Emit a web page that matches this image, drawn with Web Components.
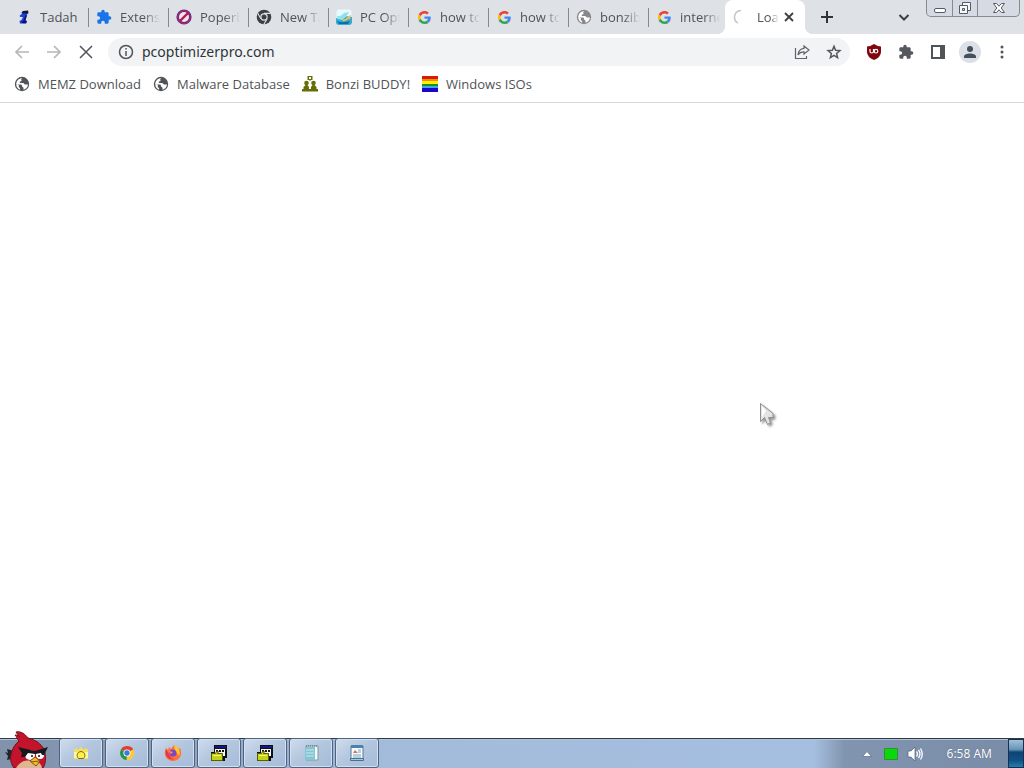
<!DOCTYPE html>
<html lang="en">
<head>
<meta charset="utf-8">
<title>pcoptimizerpro.com</title>
<style>
html,body{height:100%;margin:0}
body{font:13px/18px "Open Sans","Noto Sans",sans-serif;color:#505357;background:#fff;overflow:hidden}
</style>
</head>
<body>
<desktop-screen></desktop-screen>
<script>
const svg = (box, body, w = 16, h = w) => `<svg viewBox="0 0 ${box}" width="${w}" height="${h}" aria-hidden="true">${body}</svg>`;
const puzzle = c => svg('24 24', `<path fill="${c}" d="M20.5 11H19V7c0-1.100-.9-2-2-2h-4V3.500a2.500 2.500 0 0 0-5 0V5H4c-1.100 0-2 .9-2 2v3.800h1.500a2.700 2.700 0 0 1 0 5.400H2V20c0 1.100.9 2 2 2h3.800v-1.500a2.700 2.700 0 0 1 5.400 0V22H17c1.100 0 2-.9 2-2v-4h1.500a2.500 2.500 0 0 0 0-5z"/>`, 16);
const globe = c => svg('16 16', `<circle cx="8" cy="8" r="7.200" fill="${c}"/><path fill="#fff" d="M8.700 2.200c-1.400.4-1.700 1.100-1.300 1.900.5.700-.1 1.300-1.200 1.500-.8.200-.7 1.500.2 1.500h2.700c1 0 1.100 1.400 2.200 1.400h2.700c-.3 2.700-2.100 4.700-4.500 5.200v-1.800c0-1-1.500-.8-1.500-2 0-.9-.7-1.300-1.800-1.300H2.300c-.2 2 1.300 4.300 3.800 5.100v-1.500l-1.300-1.300V9.100l-2.600-.8C2.200 4.700 4.900 1.900 8.700 2.200z"/>`);
const google = svg('48 48', `<path fill="#ea4335" d="M24 9.500c3.540 0 6.710 1.220 9.210 3.600l6.850-6.850C35.900 2.380 30.470 0 24 0 14.620 0 6.510 5.380 2.560 13.220l7.980 6.190C12.430 13.720 17.740 9.500 24 9.500z"/><path fill="#4285f4" d="M46.980 24.550c0-1.570-.15-3.090-.38-4.550H24v9.020h12.940c-.58 2.960-2.260 5.480-4.780 7.180l7.730 6c4.510-4.180 7.090-10.360 7.090-17.650z"/><path fill="#fbbc05" d="M10.530 28.590a14.500 14.500 0 0 1 0-9.180l-7.980-6.190a24 24 0 0 0 0 21.560l7.980-6.190z"/><path fill="#34a853" d="M24 48c6.480 0 11.930-2.130 15.890-5.810l-7.730-6c-2.150 1.450-4.920 2.300-8.160 2.300-6.260 0-11.570-4.220-13.470-9.910l-7.980 6.190C6.510 42.620 14.620 48 24 48z"/>`, 13);
const tadah = svg('16 16', `<path fill="#10163f" d="M5.500 3.500 7 2l5-.500.500 2.500-2 1.500H7z"/><path fill="#1f3de0" d="M6 4.500h5.500l-1 2.500-1.500 4.500 2 .5-1 2.500H4L3.500 12l2-1L7 8H4.500L3.500 7z"/><path fill="#0b1770" d="m9.500 6 1.500.5-1.500 5 1.500.8-1 2H7l-2-1.500 2.500-1.300z"/>`);
const blocked = svg('16 16', `<circle cx="8" cy="8" r="6.300" fill="#f5e4ed" stroke="#46358c" stroke-width="2.600"/><circle cx="8" cy="8" r="6.300" fill="none" stroke="#b52362" stroke-width="1.200"/><path d="m4 12 8-8" stroke="#b01b50" stroke-width="2.400"/>`);
const chromeGray = svg('16 16', `<circle cx="8" cy="8" r="7.300" fill="#3c4044"/><path d="M8 4.400h6.500M4.900 9.800 1.700 4.200M11.100 9.800 7.900 15.300" stroke="#dee1e6" stroke-width="1.100"/><circle cx="8" cy="8" r="3.700" fill="#dee1e6"/><circle cx="8" cy="8" r="2.500" fill="#3c4044"/>`);
const optimizer = svg('16 16', `<rect x=".5" y=".5" width="15" height="15" rx="2.500" fill="#e8fafc"/><path fill="#38abcf" d="M0 9c3 1 5 1 7-.5C9 7 12 7 16 8v5q0 3-3 3H3q-3 0-3-3z"/><path fill="#8fe1ec" d="M1 7c3 1 5-1 7-3l5-1-3 5-4 3-5-1z"/><path fill="#f2bd55" d="M6 10c4 2 5-3 9-4l-1 4c-3 0-4 3-7 2z"/><path fill="#0a6cab" d="M1 12c4 2 9 1 13 0l-2 3H3z"/>`);
const spinner = svg('16 16', `<path d="M8 1.500C0 2 0 12 5 14" fill="none" stroke="#c3c6ca" stroke-width="1.500"/>`);
const buddy = svg('16 16', `<path fill="#666e08" d="M5.500 0h5v4H9L8 5 7 4H5.500z"/><circle cx="4.500" cy="7" r="2.300" fill="#666e08"/><circle cx="11.500" cy="7" r="2.300" fill="#666e08"/><path fill="#666e08" d="M3.500 9h2L7 11v2h2v-2l1.500-2h2l2 2v2H16v2.500H0V13h1.500v-2z"/><path fill="#fff" d="M7 1h2v2H7z"/>`);
const rainbow = svg('16 16', ['#d51b08','#f48b12','#fff200','#159126','#45a4e8','#1907c8'].map((c,i)=>`<rect y="${[0,3,5,8,10,12][i]}" width="16" height="${i===5?4:3}" fill="${c}"/>`).join(''));
const taskIcons = {
 explorer: svg('18 18', `<path fill="#f8df58" d="M2 5h2l1-1 1 2 3-3 3 3 1-2 1 1h2v10H2z"/><path fill="#fff7a0" d="M2 8h3v6H2zM13 8h3v6h-3z"/><path fill="#fff04c" stroke="#77680a" d="M6.500 14.500C4 12 5 8 9 7.500c4 .5 5 4.500 2.500 7z"/>`, 18),
 chrome: svg('18 18', `<path fill="#df4031" d="M9 9 2.200 5A8 8 0 0 1 16 5z"/><path fill="#fcc934" d="M9 9l7-4a8 8 0 0 1-7.500 12z"/><path fill="#29954a" d="m9 9-.5 8A8 8 0 0 1 2.200 5z"/><circle cx="9" cy="9" r="4" fill="#fff"/><circle cx="9" cy="9" r="3" fill="#3879df"/>`, 16),
 firefox: svg('18 18', `<path fill="#ff7139" d="M10 1c2 1 4 3 5 4l1-1c3 6 0 13-7 13S-1 10 2 4l2 2 1-3 2 2z"/><path fill="#ffca28" d="M10 1c5 2 7 7 5 11-1-3-3-3-4-5z"/><path fill="#e8334e" d="M2 5c-2 7 3 12 9 10-3 0-5-2-6-5z"/><circle cx="9" cy="9" r="3.500" fill="#7847c9"/><path fill="#ff9d2e" d="m5 7 4 1-2 2z"/>`, 18),
 program: svg('18 18', `<path fill="#111" d="M4 1h13v13h-2v3H1V8h3z"/><path fill="#15168c" d="M5 2h11v2H5z"/><path fill="#f7f7f7" d="M5 5h10v7H5z"/><path stroke="#111" stroke-width="2" stroke-dasharray="2 1" d="M6 7h8"/><path fill="#c8cf17" stroke="#55600a" d="M1.500 9.500h4l1-2h2l-1 2h5v7h-11z"/><path stroke="#f8f680" d="M3 11.500h8"/>`, 18),
 notepad: svg('18 18', `<path fill="#f4fafa" stroke="#7e999c" d="M4 2h12v14H4z"/><path fill="#83c5d3" d="M3 3h10v13H3z"/><path stroke="#c7e8ee" d="M4 6h8M4 9h8M4 12h8"/><path stroke="#546a70" stroke-dasharray="1 1" d="M4 2h11"/>`, 18),
 wordpad: svg('18 18', `<path fill="#f4faff" stroke="#527d9f" d="M3 2h12v13H3z"/><path fill="#4a82a9" d="M3 1h12v3H3z"/><path stroke="#7ba5c2" d="M10 6h3M10 8h3M5 11h8M5 13h8"/><path fill="#cf7854" d="m5 9 2-3 3 3z"/><path fill="#a9c5d9" stroke="#48718d" d="M2.500 14.500h13v2h-13z"/>`, 18)
};
const bird = svg('50 40', `<path fill="#222529" d="m14 23-7-2 1 4-3-1 3 4-1 4 8-2z"/><path fill="#c3142b" stroke="#6d1524" d="M19 13c-2-2-2-4-4-6 3 0 4 1 5 2-2-2-3-3-4-5 5-1 9 2 12 6 9 2 16 8 17 15 1 5 1 10-2 15H14c-3-4-4-8-3-13 1-6 4-11 8-14z"/><path fill="#dfb691" d="M16 40c5-8 12-9 17-6 5-1 8 1 9 6z"/><circle cx="30" cy="27" r="5" fill="#fff"/><circle cx="40" cy="27" r="4" fill="#fff"/><circle cx="32" cy="28" r="1" fill="#111"/><circle cx="39" cy="28" r="1" fill="#111"/><path fill="#17191d" d="m18 19 17 4 13-4-4 8h-2l-1-2-6 1-7-1-3 4h-4l1-4z"/><path fill="#f5bd27" stroke="#815315" d="m30 33 5-4 5 4-4 5z"/><path stroke="#815315" d="m31 34 8-1"/>`, 50, 40);

const define = (name, css, html) => {
  customElements.define(name, class extends HTMLElement {
    connectedCallback() {
      if (this.shadowRoot) return;
      const t = document.createElement('template');
      t.innerHTML = `<style>:host,*{box-sizing:border-box}svg{display:block;flex:none}button,a{font:inherit;color:inherit;text-decoration:none}button{border:0;background:none;padding:0;margin:0}${css}</style>` + (typeof html === 'function' ? html(this) : html);
      this.attachShadow({mode:'open'}).append(t.content.cloneNode(true));
    }
  });
};

define('browser-tab', `
:host{display:block;flex:0 1 80px;min-width:0;position:relative}
button{display:flex;align-items:center;width:100%;height:34px;padding:0 8px;gap:8px;text-align:left;border-radius:8px 8px 0 0}
.icon{display:grid;place-items:center;flex:0 0 16px;height:16px}
.title{flex:1;min-width:0;overflow:hidden;white-space:nowrap}
:host([fade]) .title{-webkit-mask-image:linear-gradient(90deg,#000 60%,transparent);mask-image:linear-gradient(90deg,#000 60%,transparent)}
:host(:not([active]))::after{content:"";position:absolute;right:-1px;top:8px;width:1px;height:19px;background:#85888d}
:host([last])::after{display:none}
:host([active]){display:flex;background:#fff;border-radius:8px 8px 0 0;margin-left:-3px}
:host([active])::before,:host([active])::after{content:"";position:absolute;bottom:0;width:8px;height:8px;top:auto;background:radial-gradient(circle at 0 0,transparent 8px,#fff 8px)}
:host([active])::before{left:-8px}
:host([active])::after{right:-8px;background:radial-gradient(circle at 100% 0,transparent 8px,#fff 8px)}
:host([active]) .tab{flex:1;min-width:0;padding-right:0}`,
'<button class="tab" role="tab"><span class="icon"><slot name="icon"></slot></span><span class="title"><slot></slot></span></button><slot name="close"></slot>');

define('window-controls', `
:host{display:flex;height:17px;border:1px solid #858a93;border-top:0;border-radius:0 0 5px 5px;background:#d6dae2}
button{display:grid;place-items:center;width:25px}
button+button{border-left:1px solid #858a93}button:last-child{width:42px}`,
`<button aria-label="Minimize">${svg('16 16','<rect x="2.500" y="8.500" width="11" height="4" rx="1.500" fill="#fff" stroke="#555b64"/>')}</button>
<button aria-label="Restore">${svg('16 16','<path fill="#f7f8fa" stroke="#555b64" d="M5.500 2.500h8v8h-8z"/><path fill="#f7f8fa" stroke="#555b64" d="M2.500 5.500h8v8h-8z"/><path fill="#d6dae2" stroke="#555b64" d="M5.500 8.500h2v2h-2z"/>')}</button>
<button aria-label="Close window">${svg('16 16','<path fill="#fff" stroke="#555b64" d="M2.500 3.500h3L8 6.200l2.500-2.700h3L10.200 8l3.300 4.500h-3L8 9.800l-2.500 2.700h-3L5.800 8z"/>')}</button>`);

define('tab-strip', `
:host{display:flex;background:#dee1e6;height:34px;padding:0 4px 0 8px}
nav{display:flex;flex:0 1 797px;min-width:0}
.close{display:grid;place-items:center;width:26px;padding-right:6px;height:34px}
.new{width:44px;display:grid;place-items:center}
.space{flex:1}
.search{width:28px;margin-right:8px;display:grid;place-items:center}`,
`<nav role="tablist" aria-label="Tabs">${[[tadah,'Tadah'],[puzzle('#1a73e8'),'Extensi'],[blocked,'Poperb'],[chromeGray,'New Ta'],[optimizer,'PC Opt'],[google,'how to'],[google,'how to'],[globe('#85878a'),'bonzib'],[google,'interne']].map(([i,t],n)=>`<browser-tab ${n?'fade':''} ${n===8?'last':''}><span slot="icon">${i}</span>${t}</browser-tab>`).join('')}
<browser-tab active fade><span slot="icon">${spinner}</span>Loa<button slot="close" class="close" aria-label="Close tab">${svg('16 16','<path d="m4 4 8 8m0-8-8 8" stroke="#3c4043" stroke-width="1.800"/>')}</button></browser-tab></nav>
<button class="new" aria-label="New tab">${svg('16 16','<path d="M8 2v12M2 8h12" stroke="#303338" stroke-width="2"/>')}</button><span class="space"></span>
<button class="search" aria-label="Search tabs">${svg('16 16','<path fill="none" d="m3.500 6 4.500 4.500L12.500 6" stroke="#3c4043" stroke-width="2"/>')}</button><window-controls></window-controls>`);

define('address-bar', `
:host{display:flex;align-items:center;flex:1;min-width:0;height:28px;border-radius:14px;background:#f1f3f4;padding:0 0 0 10px}
label{display:grid;place-items:center;width:16px}
input{flex:1;min-width:0;border:0;outline:0;background:none;font:14px/20px "Noto Sans","Open Sans",sans-serif;color:#303338;padding:0 8px 2px;height:24px}
button{width:32px;height:28px;display:grid;place-items:center}`,
`<label for="url" aria-label="Address">${svg('16 16','<circle cx="8" cy="8" r="6.500" fill="none" stroke="#505459" stroke-width="1.500"/><path d="M8 7v5M8 4v1.500" stroke="#505459" stroke-width="1.500"/>')}</label><input id="url" value="pcoptimizerpro.com" spellcheck="false">
<button aria-label="Share">${svg('16 16','<path fill="none" stroke="#5f6368" stroke-width="1.200" d="M1.500 4v10.500h11V12M10 2l5 4-5 4V7.800C7.500 7.800 5.500 8.500 4 11c.3-4 2.500-6.300 6-6.700z"/>')}</button>
<button aria-label="Bookmark">${svg('16 16','<path fill="none" stroke="#55595e" stroke-width="1.500" d="m8 2.300 1.600 4 4.300.3-3.300 2.800 1 4.200L8 11.400l-3.600 2.200 1-4.200-3.300-2.800 4.300-.3z"/>')}</button>`);

define('tool-bar', `
:host{display:flex;align-items:center;height:36px;padding:0 6px}
button{display:grid;place-items:center;width:32px;height:28px;flex:none}
address-bar{margin:0 8px 0 6px}
.avatar{width:22px;height:22px;border-radius:50%;background:#dcdfe7;margin:0 5px}`,
`<button aria-label="Back">${svg('16 16','<path fill="none" stroke="#b5b7ba" stroke-width="1.700" d="M15 8H2m6-6L2 8l6 6"/>')}</button>
<button aria-label="Forward">${svg('16 16','<path fill="none" stroke="#b5b7ba" stroke-width="1.700" d="M1 8h13M8 2l6 6-6 6"/>')}</button>
<button aria-label="Stop">${svg('16 16','<path stroke="#505459" stroke-width="1.500" d="m2 2 12 12m0-12L2 14"/>')}</button>
<address-bar></address-bar>
<button aria-label="uBlock">${svg('16 16','<path fill="#800610" d="M8 0q4 2.500 7 2.500V8q0 5-7 8-7-3-7-8V2.500Q4 2.500 8 0z"/><path fill="none" stroke="#fff" stroke-width="1.200" d="M4 5v2.500C4 9.500 7.500 9.500 7.500 7.500V5"/><circle cx="10" cy="7.200" r="1.800" fill="none" stroke="#fff" stroke-width="1.200"/>')}</button>
<button aria-label="Extensions">${puzzle('#55595e')}</button>
<button aria-label="Side panel">${svg('16 16','<path fill="none" stroke="#505459" stroke-width="2" d="M2 2h12v12H2z"/><path fill="#505459" d="M10 2h4v12h-4z"/>')}</button>
<button class="avatar" aria-label="Profile">${svg('16 16','<circle cx="8" cy="5" r="3" fill="#45505b"/><path fill="#45505b" d="M2 14v-1.500c0-4 12-4 12 0V14z"/>')}</button>
<button aria-label="Menu">${svg('16 16','<g fill="#505459"><circle cx="8" cy="3" r="1.500"/><circle cx="8" cy="8" r="1.500"/><circle cx="8" cy="13" r="1.500"/></g>')}</button>`);

define('bookmark-link', `:host{display:block}a{display:flex;align-items:center;gap:8px;white-space:nowrap}`, '<a href="#"><slot name="icon"></slot><slot></slot></a>');
define('bookmark-bar', `:host{display:flex;align-items:center;gap:12px;height:33px;padding:0 14px 4px;border-bottom:1px solid #d5d7da}`,
[[globe('#505459'),'MEMZ Download'],[globe('#505459'),'Malware Database'],[buddy,'Bonzi BUDDY!'],[rainbow,'Windows ISOs']].map(([i,t])=>`<bookmark-link><span slot="icon">${i}</span>${t}</bookmark-link>`).join(''));

define('task-button', `:host{display:block;width:44px;height:30px}button{display:grid;place-items:center;width:100%;height:100%;border:1px solid #4e6380;border-radius:3px;background:linear-gradient(145deg,#d0dceb,#b4c7df 45%,#a5bbd8);box-shadow:inset 0 0 0 1px #d3e0ef}`,
e=>`<button aria-label="${e.getAttribute('app')}">${taskIcons[e.getAttribute('app')]}</button>`);
define('task-bar', `
:host{display:flex;height:30px;border-top:1px solid #303947;background:linear-gradient(90deg,#8192ab,#8395ae 50px,#a3bbdb 380px,#a5bfe0 calc(100% - 210px),#8295b0 calc(100% - 180px),#788ba7);box-shadow:inset 0 1px #b2c4da}
.start{width:59px;display:flex;align-items:flex-end;height:29px;flex:none}
.tasks{display:flex;gap:2px;flex:1;min-width:0;margin-top:-1px}
.tray{display:flex;align-items:center;color:#fff}
.tray button{display:grid;place-items:center;width:24px}
time{font:12px/18px "Noto Sans",sans-serif;padding:0 16px 0 20px;text-shadow:0 0 1px #44546c;white-space:nowrap}
.desktop{width:16px;border:1px solid #16314f;background:linear-gradient(#a0c0d8,#6893b7 35%,#0d4479 45%,#135083 75%,#247eb0)}`,
`<button class="start" aria-label="Start">${bird}</button><div class="tasks">${['explorer','chrome','firefox','program','program','notepad','wordpad'].map(a=>`<task-button app="${a}"></task-button>`).join('')}</div>
<div class="tray"><button aria-label="Show hidden icons">${svg('16 16','<path fill="#fff" stroke="#596c88" stroke-width=".7" d="m3.500 10.500 4.500-5 4.500 5z"/>')}</button><button aria-label="Display">${svg('16 16','<path fill="#08d908" stroke="#398b3e" d="M1.500 2.500h13v11h-13z"/>')}</button>
<button aria-label="Volume">${svg('16 16','<path fill="#fff" stroke="#4e5f77" stroke-width=".7" d="M1 5h3l4-4v14l-4-4H1z"/><path fill="none" stroke="#fff" stroke-width="1.300" d="M9.500 5.500q2 2.500 0 5M11.500 4q3 4 0 8M13.500 2.500q3.500 5.500 0 11"/>')}</button><time>6:58 AM</time></div><button class="desktop" aria-label="Show desktop"></button>`);
define('mouse-pointer', `:host{position:absolute;left:759px;top:402px;pointer-events:none;filter:drop-shadow(2px 2px 1px #0006)}`, svg('16 24','<path fill="#e4e4e4" stroke="#909090" d="M1.500 1.500v18l4-4 3 7 3-2-2-5h4.500v-4z"/><path fill="#fff" d="m3 4 4 5-4 6z"/>',16,24));
define('desktop-screen', `:host{display:flex;flex-direction:column;height:100vh;position:relative}main{flex:1;background:#fff}tab-strip,tool-bar,bookmark-bar,task-bar{flex:none}`,
'<tab-strip></tab-strip><tool-bar></tool-bar><bookmark-bar></bookmark-bar><main></main><task-bar></task-bar><mouse-pointer></mouse-pointer>');
</script>
</body>
</html>
